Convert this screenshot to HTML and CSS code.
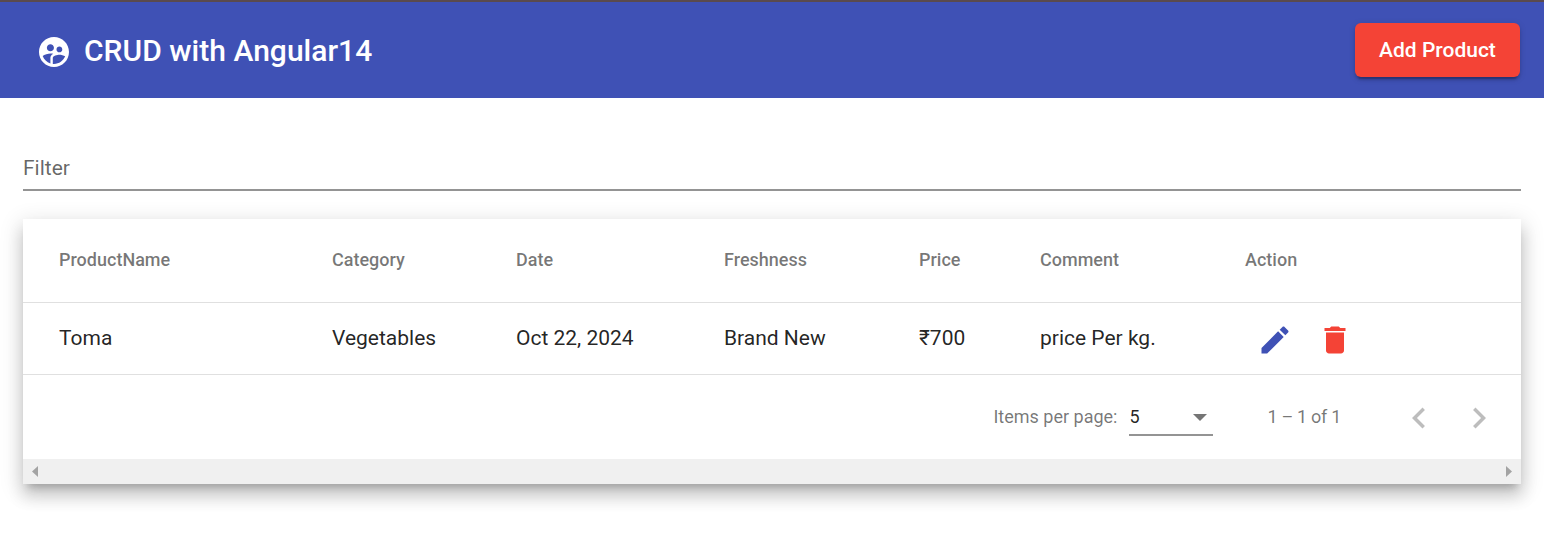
FILE: index.html
```
<!DOCTYPE html>
<html lang="en">
<head>
<meta charset="utf-8">
<title>CRUD with Angular14</title>
<link rel="stylesheet" href="styles.css">
</head>
<body>
<header class="toolbar">
  <svg class="icon" viewBox="0 0 24 24"><path d="M11.99 2c-5.52 0-10 4.48-10 10s4.48 10 10 10 10-4.48 10-10-4.48-10-10-10zm3.61 6.34c1.07 0 1.93.86 1.93 1.93 0 1.07-.86 1.93-1.93 1.93-1.07 0-1.93-.86-1.93-1.93-.01-1.07.86-1.93 1.93-1.93zm-6-1.58c1.3 0 2.36 1.06 2.36 2.36 0 1.3-1.06 2.36-2.36 2.36s-2.36-1.06-2.36-2.36c0-1.31 1.05-2.36 2.36-2.36zm0 9.13v3.75c-2.4-.75-4.3-2.6-5.14-4.96 1.05-1.12 3.67-1.69 5.14-1.69.53 0 1.2.08 1.9.22-1.64.87-1.9 2.02-1.9 2.68zM11.99 20c-.27 0-.53-.01-.79-.04v-4.07c0-1.42 2.94-2.13 4.4-2.13 1.07 0 2.92.39 3.84 1.15-1.17 2.97-4.06 5.09-7.45 5.09z"/></svg>
  <h1 class="title"><span>CRUD with Angular14</span></h1>
  <button class="add"><span>Add Product</span></button>
</header>
<main class="content">
  <div class="filter"><span>Filter</span></div>
  <section class="card">
    <div class="row head">
      <span>ProductName</span><span>Category</span><span>Date</span><span>Freshness</span><span>Price</span><span>Comment</span><span>Action</span>
    </div>
    <div class="row body">
      <span>Toma</span><span>Vegetables</span><span>Oct 22, 2024</span><span>Brand New</span><span>₹700</span><span>price Per kg.</span>
      <div class="actions">
        <svg class="icon edit" viewBox="0 0 24 24"><path d="M3 17.25V21h3.75L17.81 9.94l-3.75-3.75L3 17.25zM20.71 7.04c.39-.39.39-1.02 0-1.41l-2.34-2.34c-.39-.39-1.02-.39-1.41 0l-1.83 1.83 3.75 3.75 1.83-1.83z"/></svg>
        <svg class="icon delete" viewBox="0 0 24 24"><path d="M6 19c0 1.100.9 2 2 2h8c1.100 0 2-.9 2-2V7H6v12zM19 4h-3.500l-1-1h-5l-1 1H5v2h14V4z"/></svg>
      </div>
    </div>
    <div class="paginator">
      <span class="label">Items per page:</span>
      <div class="select"><span>5</span><svg class="arrow" viewBox="0 0 14 7"><path d="M0 0h14L7 7z"/></svg></div>
      <span class="range">1 – 1 of 1</span>
      <div class="nav"><svg viewBox="0 0 24 24"><path d="M15.41 7.41L14 6l-6 6 6 6 1.410-1.410L10.830 12z"/></svg></div>
      <div class="nav"><svg viewBox="0 0 24 24"><path d="M10 6L8.590 7.410 13.170 12l-4.580 4.590L10 18l6-6z"/></svg></div>
    </div>
    <div class="scrollbar">
      <svg viewBox="0 0 6 11"><path d="M6 0v11L0 5.500z"/></svg>
      <svg viewBox="0 0 6 11"><path d="M0 0v11l6-5.500z"/></svg>
    </div>
  </section>
</main>
</body>
</html>
```
FILE: styles.css
```
* { box-sizing: border-box; }
body {
  margin: 0;
  height: 546px;
  overflow: hidden;
  background: #fff;
  color: rgba(0, 0, 0, .87);
  font-family: Roboto, "Noto Sans", sans-serif;
  font-size: 21px;
}
svg { display: block; flex: none; }
.icon { width: 36px; height: 36px; fill: currentColor; }
.toolbar {
  display: flex;
  align-items: center;
  height: 98px;
  padding: 4px 24px 0 36px;
  border-top: 2px solid #5a4a4d;
  background: #3f51b5;
  color: #fff;
}
.title {
  flex: 1;
  margin: 0 0 2px 12px;
  font-size: 30px;
  font-weight: 500;
  line-height: 48px;
  letter-spacing: .03px;
}
.add {
  width: 165px;
  height: 54px;
  margin-bottom: 4px;
  padding: 0;
  border: 0;
  border-radius: 6px;
  background: #f44336;
  color: #fff;
  font: 500 21px/54px Roboto, sans-serif;
  box-shadow: 0 4.5px 1.5px -3px rgba(0, 0, 0, .2), 0 3px 3px rgba(0, 0, 0, .14), 0 1.5px 7.5px rgba(0, 0, 0, .12);
}
.content { padding: 50px 23px 0; }
.filter {
  height: 43px;
  border-bottom: 2px solid #949494;
  color: rgba(0, 0, 0, .6);
  line-height: 40px;
}
.card {
  margin-top: 28px;
  background: #fff;
  box-shadow: 0 7.5px 7.5px -4.5px rgba(0, 0, 0, .2), 0 12px 15px 1.5px rgba(0, 0, 0, .14), 0 4.5px 21px 3px rgba(0, 0, 0, .12);
}
.row {
  display: grid;
  grid-template-columns: 273px 184px 208px 195px 121px 205px 1fr;
  align-items: center;
  padding-left: 36px;
  border-bottom: 1px solid #e0e0e0;
}
.head {
  height: 84px;
  padding-bottom: 2px;
  color: rgba(0, 0, 0, .54);
  font-size: 18px;
  font-weight: 500;
}
.body { height: 72px; padding-bottom: 1px; }
.actions { display: flex; gap: 24px; padding: 4px 0 0 11.5px; }
.edit { color: #3f51b5; }
.delete { color: #f44336; }
.paginator {
  display: flex;
  align-items: center;
  justify-content: flex-end;
  height: 84px;
  padding: 0 12px 0 0;
  color: rgba(0, 0, 0, .54);
  font-size: 18px;
}
.label { margin: 0 12px 2px 0; }
.select {
  display: flex;
  align-items: center;
  justify-content: space-between;
  width: 84px;
  height: 38px;
  padding-right: 6px;
  border-bottom: 2px solid #949494;
  color: rgba(0, 0, 0, .87);
}
.arrow { width: 14px; height: 7px; margin-top: 2px; fill: #757575; }
.range { margin: 0 48px 2px 54px; letter-spacing: -.3px; }
.nav { display: flex; justify-content: center; width: 60px; padding-top: 2px; }
.nav svg { width: 42px; height: 42px; fill: #bdbdbd; }
.scrollbar {
  display: flex;
  align-items: center;
  justify-content: space-between;
  height: 25px;
  padding: 0 9px;
  background: #f0f0f0;
}
.scrollbar svg { width: 6px; height: 11px; fill: #a3a3a3; }
```
